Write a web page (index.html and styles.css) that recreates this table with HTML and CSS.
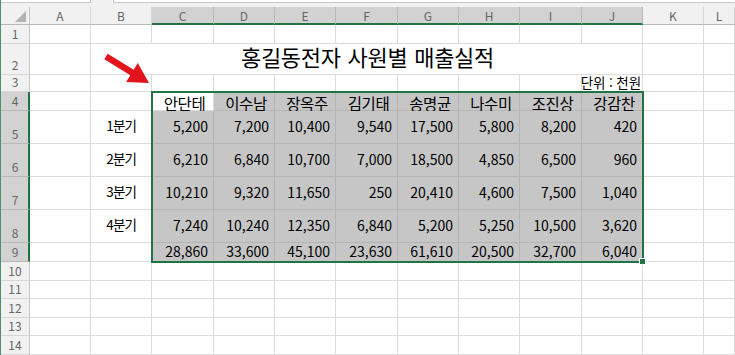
FILE: index.html
```html
<!DOCTYPE html>
<html lang="ko">
<head>
<meta charset="utf-8">
<title>홍길동전자 사원별 매출실적</title>
<link rel="stylesheet" href="styles.css">
</head>
<body>
<div class="app">
  <div class="strip"><span class="namebox"></span><span class="fbox"></span></div>
  <div class="wrap">
    <div class="sheet">
      <div class="corner"><span class="tri"></span></div><div class="ch">A</div><div class="ch">B</div><div class="ch sel">C</div><div class="ch sel">D</div><div class="ch sel">E</div><div class="ch sel">F</div><div class="ch sel">G</div><div class="ch sel">H</div><div class="ch sel">I</div><div class="ch sel">J</div><div class="ch">K</div><div class="ch">L</div>

      <div class="rh">1</div><div class="c"></div><div class="c"></div><div class="c"></div><div class="c"></div><div class="c"></div><div class="c"></div><div class="c"></div><div class="c"></div><div class="c"></div><div class="c"></div><div class="c"></div><div class="c"></div>

      <div class="rh">2</div><div class="c"></div><div class="c title">홍길동전자 사원별 매출실적</div><div class="c"></div><div class="c"></div>

      <div class="rh">3</div><div class="c"></div><div class="c"></div><div class="c"></div><div class="c"></div><div class="c"></div><div class="c"></div><div class="c"></div><div class="c"></div><div class="c"></div><div class="c unit">단위 : 천원</div><div class="c"></div><div class="c"></div>

      <div class="rh sel">4</div><div class="c"></div><div class="c"></div><div class="c nm act">안단테</div><div class="c nm s">이수남</div><div class="c nm s">장옥주</div><div class="c nm s">김기태</div><div class="c nm s">송명균</div><div class="c nm s">나수미</div><div class="c nm s">조진상</div><div class="c nm s">강감찬</div><div class="c"></div><div class="c"></div>

      <div class="rh sel">5</div><div class="c"></div><div class="c lbl">1분기</div><div class="c n s">5,200</div><div class="c n s">7,200</div><div class="c n s">10,400</div><div class="c n s">9,540</div><div class="c n s">17,500</div><div class="c n s">5,800</div><div class="c n s">8,200</div><div class="c n s">420</div><div class="c"></div><div class="c"></div>

      <div class="rh sel">6</div><div class="c"></div><div class="c lbl">2분기</div><div class="c n s">6,210</div><div class="c n s">6,840</div><div class="c n s">10,700</div><div class="c n s">7,000</div><div class="c n s">18,500</div><div class="c n s">4,850</div><div class="c n s">6,500</div><div class="c n s">960</div><div class="c"></div><div class="c"></div>

      <div class="rh sel">7</div><div class="c"></div><div class="c lbl">3분기</div><div class="c n s">10,210</div><div class="c n s">9,320</div><div class="c n s">11,650</div><div class="c n s">250</div><div class="c n s">20,410</div><div class="c n s">4,600</div><div class="c n s">7,500</div><div class="c n s">1,040</div><div class="c"></div><div class="c"></div>

      <div class="rh sel">8</div><div class="c"></div><div class="c lbl">4분기</div><div class="c n s">7,240</div><div class="c n s">10,240</div><div class="c n s">12,350</div><div class="c n s">6,840</div><div class="c n s">5,200</div><div class="c n s">5,250</div><div class="c n s">10,500</div><div class="c n s">3,620</div><div class="c"></div><div class="c"></div>

      <div class="rh sel">9</div><div class="c"></div><div class="c"></div><div class="c n s">28,860</div><div class="c n s">33,600</div><div class="c n s">45,100</div><div class="c n s">23,630</div><div class="c n s">61,610</div><div class="c n s">20,500</div><div class="c n s">32,700</div><div class="c n s">6,040</div><div class="c"></div><div class="c"></div>

      <div class="rh">10</div><div class="c"></div><div class="c"></div><div class="c"></div><div class="c"></div><div class="c"></div><div class="c"></div><div class="c"></div><div class="c"></div><div class="c"></div><div class="c"></div><div class="c"></div><div class="c"></div>

      <div class="rh">11</div><div class="c"></div><div class="c"></div><div class="c"></div><div class="c"></div><div class="c"></div><div class="c"></div><div class="c"></div><div class="c"></div><div class="c"></div><div class="c"></div><div class="c"></div><div class="c"></div>

      <div class="rh">12</div><div class="c"></div><div class="c"></div><div class="c"></div><div class="c"></div><div class="c"></div><div class="c"></div><div class="c"></div><div class="c"></div><div class="c"></div><div class="c"></div><div class="c"></div><div class="c"></div>

      <div class="rh">13</div><div class="c"></div><div class="c"></div><div class="c"></div><div class="c"></div><div class="c"></div><div class="c"></div><div class="c"></div><div class="c"></div><div class="c"></div><div class="c"></div><div class="c"></div><div class="c"></div>

      <div class="rh">14</div><div class="c"></div><div class="c"></div><div class="c"></div><div class="c"></div><div class="c"></div><div class="c"></div><div class="c"></div><div class="c"></div><div class="c"></div><div class="c"></div><div class="c"></div><div class="c"></div>
    </div>
    <div class="selection"><span class="handle"></span></div>
    <svg class="arrow" width="55" height="40" viewBox="0 0 55 40"><polygon points="7.7,3.8 33.7,19.8 37.8,13.1 49,33 26.2,31.9 30.3,25.2 4.3,9.2" fill="#e3141b"/></svg>
  </div>
</div>
</body>
</html>
```
FILE: styles.css
```css
html, body {
  margin: 0;
  padding: 0;
  background: #ffffff;
}

.app {
  width: 734px;
  height: 355px;
  overflow: hidden;
  border-left: 1px solid #4f8f69;
  font-family: "Noto Sans CJK KR", "Noto Sans", sans-serif;
  color: #000;
}

.strip {
  height: 7px;
  background: #f1f1f1;
  display: flex;
  gap: 22px;
  align-items: flex-start;
}
.namebox, .fbox {
  display: block;
  height: 2px;
  background: #fff;
  border-bottom: 1px solid #c9c9c9;
}
.namebox { width: 89px; border-right: 1px solid #c9c9c9; }
.fbox { flex: 1; border-left: 1px solid #c9c9c9; }

.wrap {
  position: relative;
}

.sheet {
  display: grid;
  grid-template-columns: 29px 61px 61px 62px 61px 61px 62px 61px 61px 62px 61px 61px 31px;
  grid-template-rows: 18px 19px 31px 17px 19px 33px 33px 33px 33px 19px 19px 18px 19px 18px 19px;
}

.sheet > div {
  box-sizing: border-box;
  min-width: 0;
  line-height: 1.15;
}

.corner {
  background: #f1f1f1;
  border-right: 1px solid #c6c6c6;
  border-bottom: 1px solid #b9b9b9;
  position: relative;
}
.tri {
  position: absolute;
  right: 3px;
  bottom: 2px;
  width: 0;
  height: 0;
  border-left: 11px solid transparent;
  border-bottom: 11px solid #b4b4b4;
}

.ch {
  background: #f1f1f1;
  border-right: 1px solid #d6d6d6;
  border-bottom: 1px solid #b9b9b9;
  color: #666;
  font-size: 12px;
  display: flex;
  align-items: center;
  justify-content: center;
  padding-top: 1px;
}
.ch.sel {
  background: #d2d2d2;
  border-right-color: #b8b8b8;
  border-bottom: 2px solid #217346;
  padding-top: 2px;
}

.rh {
  background: #f1f1f1;
  border-right: 1px solid #c6c6c6;
  border-bottom: 1px solid #d6d6d6;
  color: #666;
  font-size: 12px;
  display: flex;
  align-items: flex-end;
  justify-content: center;
  padding-bottom: 2px;
}
.rh.sel {
  background: #d2d2d2;
  border-right: 2px solid #217346;
  border-bottom-color: #b8b8b8;
  padding-left: 1px;
}

.c {
  border-right: 1px solid #dcdcdc;
  border-bottom: 1px solid #dcdcdc;
  display: flex;
  align-items: center;
  white-space: nowrap;
}

.c.s {
  background: #c6c6c6;
  border-right-color: #b4b4b4;
  border-bottom-color: #b4b4b4;
}
.c.act {
  background: #fff;
}

.title {
  grid-column: span 9;
  justify-content: center;
  font-size: 22px;
  letter-spacing: -0.3px;
  word-spacing: 1px;
  padding-bottom: 4px;
  padding-left: 2px;
}

.sheet > .unit {
  justify-content: flex-end;
  font-size: 13.5px;
  line-height: 14px;
  letter-spacing: -0.1px;
  padding-right: 1px;
  padding-bottom: 3px;
}

.sheet > .nm {
  justify-content: center;
  font-size: 15.5px;
  line-height: 16px;
  letter-spacing: -0.5px;
  padding-top: 3px;
  padding-left: 4px;
}

.lbl {
  justify-content: flex-end;
  font-size: 13.5px;
  letter-spacing: -0.9px;
  padding-right: 15px;
  padding-bottom: 3px;
}

.n {
  justify-content: flex-end;
  font-size: 14px;
  padding-right: 5px;
  padding-bottom: 1px;
}

.selection {
  position: absolute;
  left: 150px;
  top: 84px;
  width: 493px;
  height: 172px;
  box-sizing: border-box;
  border: 2px solid #217346;
  pointer-events: none;
}
.handle {
  position: absolute;
  right: -4px;
  bottom: -4px;
  width: 5px;
  height: 5px;
  background: #217346;
  border: 1px solid #fff;
}

.arrow {
  position: absolute;
  left: 99px;
  top: 43px;
}
```
